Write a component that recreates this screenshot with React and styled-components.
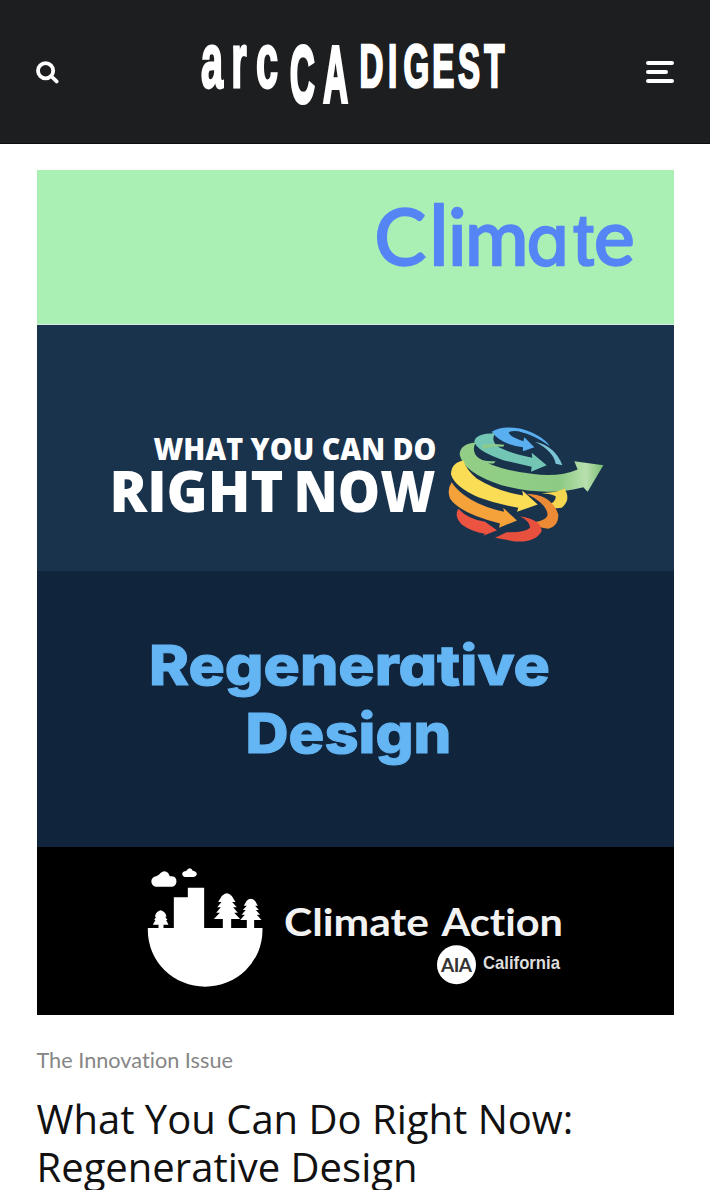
import React from 'react';
import styled, { createGlobalStyle } from 'styled-components';

const GlobalStyle = createGlobalStyle`
    * { box-sizing: border-box; }
    body {
        margin: 0;
        background: #fff;
        font-family: "Open Sans", sans-serif;
        font-variant-ligatures: none;
    }
`

const Header = styled.header`
    display: flex;
    align-items: center;
    justify-content: space-between;
    height: 144px;
    padding: 0 36px;
    background: #1d1e20;
    border-bottom: 1px solid #0c0c0d;
`

const IconButton = styled.button`
    display: flex;
    width: 28px;
    padding: 0;
    border: 0;
    background: none;
`

const Burger = styled.span`
    display: flex;
    flex-direction: column;
    gap: 5px;
`

const BurgerLine = styled.span`
    height: 4px;
    width: ${props => props.$short ? "22px" : "28px"};
    border-radius: 2px;
    background: #fff;
`

const Page = styled.main`
    padding: 26px 36.5px 0;
`

const Poster = styled.div`
    display: flex;
    flex-direction: column;
`

const Panel = styled.div`
    height: ${props => props.$height}px;
    background: ${props => props.$color};
    border-bottom: ${props => props.$line ? "1px solid " + props.$line : "0"};
`

const Art = styled.svg`
    display: block;
    width: 100%;
    height: 100%;
`

const Category = styled.div`
    margin-top: 32px;
    font-family: Lato, sans-serif;
    font-size: 21.7px;
    line-height: 26px;
    color: #868686;
`

const Title = styled.h1`
    margin: 22px 0 0;
    font-size: 40px;
    font-weight: 400;
    line-height: 47.5px;
    color: #111;
`

const LogoText = styled.text`
    font-family: "Liberation Sans", sans-serif;
    font-size: 60px;
    font-weight: 700;
    fill: #fff;
    stroke: #fff;
    stroke-width: ${props => props.$stroke || 2.2}px;
    vector-effect: non-scaling-stroke;
`

const Word = styled.text`
    font-family: ${props => props.$font}, sans-serif;
    font-size: ${props => props.$size}px;
    font-weight: ${props => props.$weight || 400};
    fill: ${props => props.$fill || "#fff"};
    stroke: ${props => props.$fill || "#fff"};
    stroke-width: ${props => props.$stroke || 0}px;
    font-feature-settings: "cv11";
`

function Logo() {
	return (
		<svg width="310" height="143" viewBox="200 0 310 143">
			<LogoText transform="translate(201 87) scale(.66 1.28)" x="0 46 83.5">arc</LogoText>
			<LogoText transform="translate(290 101.8) scale(.57 1.33)" $stroke={3.2} x="0 58.5">CA</LogoText>
			<LogoText transform="translate(359.5 87) scale(.55 1.01)" x="0 52 80 132.5 179 227">DIGEST</LogoText>
		</svg>
	)
}

function Globe() {
	return (
		<g transform="translate(434.5 414.5) scale(.3333)">
			<path fill="#5aaff0" d="M170 52Q200 32 255 42Q320 60 345 95Q300 62 250 50Q224 47 221 55Q226 68 265 80L268 68L298 98L264 110L264 98Q200 92 170 52Z" />
			<path fill="#7ac4d6" d="M300 82Q360 95 382 152L362 148Q355 110 300 82Z" />
			<path fill="#73c6b4" d="M180 56Q120 56 118 82Q125 110 205 137L290 157L288 172L335 152L290 115L292 130Q230 117 195 100Q165 82 180 56Z" />
			<path fill="#8ccb8c" d="M140 92Q170 86 208 91L205 97Q170 94 145 104ZM115 128Q145 142 182 140L176 147Q140 150 115 128Z" />
			<path fill="url(#leaf)" d="M122 84Q75 88 74 120Q85 175 200 212Q330 248 445 218L458 232L505 152L418 140L428 165Q370 190 290 178Q180 165 130 130Q108 110 122 84Z" />
			<path fill="#fbdc55" d="M85 138Q48 145 48 180Q60 218 130 248Q190 270 250 280L246 292L308 270L262 228L264 243Q190 232 125 192Q95 167 85 138Z" />
			<path fill="#f5d650" d="M388 222Q410 255 380 280Q355 285 330 272Q365 266 362 245Q350 238 320 236Q370 234 388 222Z" />
			<path fill="#f5a23a" d="M50 203Q35 225 45 252Q75 297 195 327L192 340L246 318L205 280L207 292Q130 275 85 240Q60 220 50 203Z" />
			<path fill="#ed8a35" d="M275 238Q350 240 370 300Q372 335 340 343Q310 340 288 324Q335 320 338 300Q335 268 275 238Z" />
			<path fill="#ec5340" d="M70 283Q55 305 80 330Q110 352 150 358L145 364L186 347L150 322Q100 315 70 283Z" />
			<path fill="#e8503e" d="M255 305Q320 315 320 350Q300 385 240 381L180 370L215 353Q270 355 285 340Q285 320 255 305Z" />
		</g>
	)
}

function Skyline() {
	return (
		<g transform="translate(135 855) scale(.3333)" fill="#fff">
			<path d="M37 219H115V127H157V98H206V219H381V226A172 169 0 0 1 37 226Z" />
			<path d="M64 95A14 14 0 0 1 62 64Q72 60 75 54Q87 44 98 54L103 64Q123 62 123 80Q121 93 110 95Z" />
			<path d="M148 66Q140 64 140 56Q142 48 152 48Q162 32 172 47Q184 49 184 58Q182 66 175 66Z" />
			<path d="M69 220V209H52L60 195H56L62 185H58Q62 168 76 166Q90 170 93 185H89L96 195H92L99 209H84V220Z" />
			<path d="M262 220V192H235L253 173H242L256 157H245L258 141H248L259 123Q274 107 289 123L300 141H290L304 157H293L307 173H296L314 192H287V220Z" />
			<path d="M334 220V195H314L328 179H318L331 165H322L334 152H325L333 138Q346 124 359 138L367 152H359L370 165H361L374 179H364L378 195H356V220Z" />
		</g>
	)
}

export default function App() {
	return (
		<>
			<GlobalStyle />
			<Header>
				<IconButton aria-label="Search">
					<svg width="24" height="24" viewBox="36 60 24 24" fill="none" stroke="#fff" strokeWidth="3.8" strokeLinecap="round">
						<circle cx="45.6" cy="70.7" r="7.6" />
						<path d="M51.5 76.5L56.6 81.4" />
					</svg>
				</IconButton>
				<Logo />
				<IconButton aria-label="Menu">
					<Burger>
						<BurgerLine />
						<BurgerLine $short />
						<BurgerLine />
					</Burger>
				</IconButton>
			</Header>
			<Page>
				<Poster>
					<Panel $height={155} $color="#aaf0b4" $line="#dcebe4">
						<Art viewBox="36.5 170 637 154">
							<Word $font="Lato" $size={77} $fill="#5585f5" $stroke={2.4} y="264.5">
								<tspan x="374">C</tspan>
								<tspan x="428.5" fontSize="84">l</tspan>
								<tspan x="447.5 464.5">im</tspan>
								<tspan x="526" fontFamily="Inter" fontSize="69">a</tspan>
								<tspan x="573" fontFamily="Liberation Sans" fontSize="72">t</tspan>
								<tspan x="593.5">e</tspan>
							</Word>
						</Art>
					</Panel>
					<Panel $height={245.5} $color="#19334d">
						<Art viewBox="36.5 325 637 245.5">
							<defs>
								<linearGradient id="leaf">
									<stop offset="0" stopColor="#93ce86" />
									<stop offset=".7" stopColor="#8dcb84" />
									<stop offset=".88" stopColor="#b9e0ae" />
									<stop offset="1" stopColor="#79bd72" />
								</linearGradient>
							</defs>
							<Word $font="Open Sans" $size={30.5} $weight={800} x="153" y="460" textLength="283" lengthAdjust="spacingAndGlyphs">WHAT YOU CAN DO</Word>
							<Word $font="Open Sans" $size={57} $weight={800} y="511.5">
								<tspan x="109" textLength="174" lengthAdjust="spacingAndGlyphs">RIGHT</tspan>
								<tspan x="293" textLength="142" lengthAdjust="spacingAndGlyphs">NOW</tspan>
							</Word>
							<Globe />
						</Art>
					</Panel>
					<Panel $height={276.5} $color="#10243c">
						<Art viewBox="36.5 570.5 637 276.5">
							<Word $font="Inter" $size={55} $weight={800} $fill="#64b5f3" $stroke={1} x="148.5" y="684.5" textLength="401" lengthAdjust="spacingAndGlyphs">Regenerative</Word>
							<Word $font="Inter" $size={55} $weight={800} $fill="#64b5f3" $stroke={1} x="245" y="752.5" textLength="206" lengthAdjust="spacingAndGlyphs">Design</Word>
						</Art>
					</Panel>
					<Panel $height={168} $color="#000">
						<Art viewBox="36.5 847 637 168">
							<Skyline />
							<Word $font="Lato" $size={38} $weight={700} $fill="#f2f2f2" x="283.5" y="936" textLength="145" lengthAdjust="spacingAndGlyphs">Climate</Word>
							<Word $font="Lato" $size={38} $weight={700} $fill="#f2f2f2" x="441" y="936" textLength="121.5" lengthAdjust="spacingAndGlyphs">Action</Word>
							<circle cx="456" cy="964.7" r="19.5" fill="#fff" />
							<Word $font="Lato" $size={19} $weight={700} $fill="#333" x="440.5" y="971.5" textLength="31">AIA</Word>
							<Word $font="Liberation Sans" $size={18.5} $weight={700} $fill="#ddd" x="482.5" y="968.5" textLength="77" lengthAdjust="spacingAndGlyphs">California</Word>
						</Art>
					</Panel>
				</Poster>
				<Category>The Innovation Issue</Category>
				<Title>What You Can Do Right Now: Regenerative Design</Title>
			</Page>
		</>
	)
}
